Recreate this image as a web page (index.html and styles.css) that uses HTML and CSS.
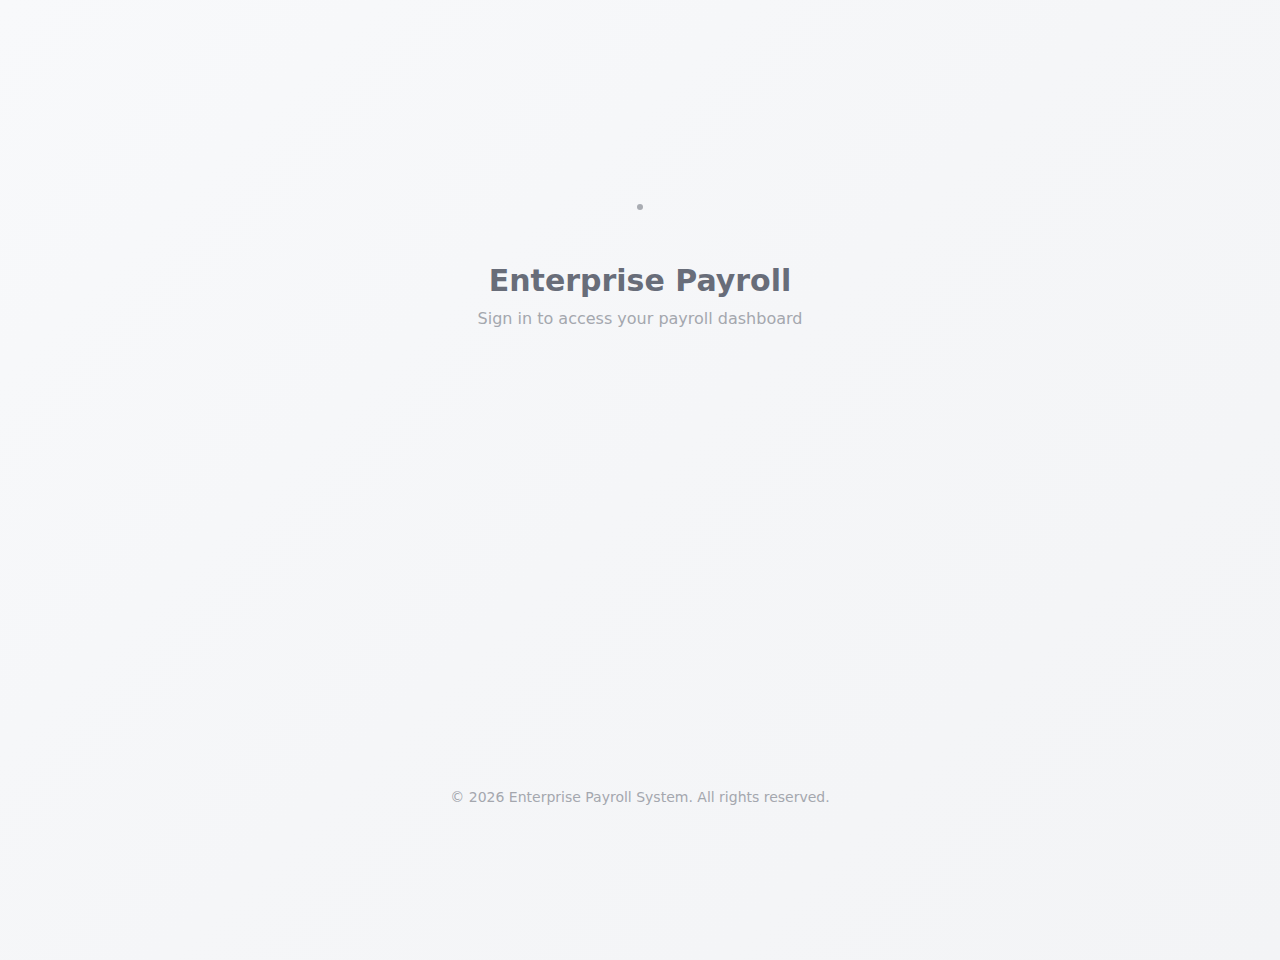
FILE: index.html
```html
<!DOCTYPE html>
<html lang="en">
<head>
<meta charset="utf-8">
<title>Enterprise Payroll</title>
<link rel="stylesheet" href="styles.css">
</head>
<body>
<main class="page">
  <section class="hero">
    <div class="logo-dot"></div>
    <h1 class="title">Enterprise Payroll</h1>
    <p class="subtitle">Sign in to access your payroll dashboard</p>
  </section>
  <footer class="footer">© 2026 Enterprise Payroll System. All rights reserved.</footer>
</main>
</body>
</html>
```
FILE: styles.css
```css
html, body {
  margin: 0;
  padding: 0;
  height: 100%;
}
body {
  font-family: "DejaVu Sans", Verdana, sans-serif;
  background: linear-gradient(135deg, #f8f9fb 0%, #f5f6f8 50%, #f3f4f6 100%);
}
.page {
  height: 960px;
  display: flex;
  flex-direction: column;
  align-items: center;
}
.hero {
  display: flex;
  flex-direction: column;
  align-items: center;
  padding-top: 204px;
}
.logo-dot {
  width: 6px;
  height: 6px;
  border-radius: 50%;
  background: #a9acb2;
}
.title {
  margin: 53px 0 0;
  font-size: 30px;
  line-height: 36px;
  font-weight: bold;
  color: #686d79;
}
.subtitle {
  margin: 8px 0 0;
  font-size: 16px;
  line-height: 24px;
  color: #a4a7ae;
}
.footer {
  margin-top: 456px;
  font-size: 14px;
  line-height: 20px;
  color: #a4a7ae;
}
```
